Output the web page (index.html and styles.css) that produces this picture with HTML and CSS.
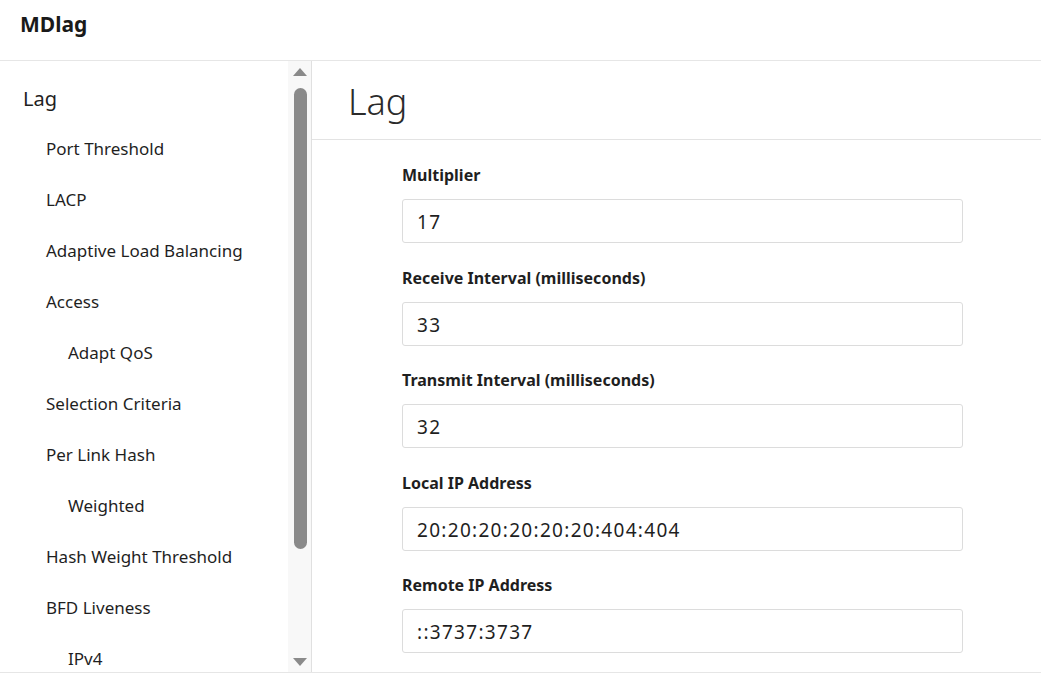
FILE: index.html
```html
<!DOCTYPE html>
<html>
<head>
<meta charset="utf-8">
<link rel="stylesheet" href="styles.css">
</head>
<body>
<header class="topbar"><h1 class="app-title">MDlag</h1></header>
<div class="workspace">
  <nav class="sidenav">
    <ul class="navlist">
      <li class="nav-item lvl0">Lag</li>
      <li class="nav-item lvl1">Port Threshold</li>
      <li class="nav-item lvl1">LACP</li>
      <li class="nav-item lvl1">Adaptive Load Balancing</li>
      <li class="nav-item lvl1">Access</li>
      <li class="nav-item lvl2">Adapt QoS</li>
      <li class="nav-item lvl1">Selection Criteria</li>
      <li class="nav-item lvl1">Per Link Hash</li>
      <li class="nav-item lvl2">Weighted</li>
      <li class="nav-item lvl1">Hash Weight Threshold</li>
      <li class="nav-item lvl1">BFD Liveness</li>
      <li class="nav-item lvl2">IPv4</li>
    </ul>
    <div class="scrollbar">
      <div class="arrow up"></div>
      <div class="thumb-track"><div class="thumb"></div></div>
      <div class="arrow down"></div>
    </div>
  </nav>
  <main class="content">
    <div class="page-head"><h2 class="page-title">Lag</h2></div>
    <form class="form">
      <div class="field"><label class="field-label">Multiplier</label><div class="input">17</div></div>
      <div class="field"><label class="field-label">Receive Interval (milliseconds)</label><div class="input">33</div></div>
      <div class="field"><label class="field-label">Transmit Interval (milliseconds)</label><div class="input">32</div></div>
      <div class="field"><label class="field-label">Local IP Address</label><div class="input">20:20:20:20:20:20:404:404</div></div>
      <div class="field"><label class="field-label">Remote IP Address</label><div class="input">::3737:3737</div></div>
    </form>
  </main>
</div>
</body>
</html>
```
FILE: styles.css
```css
* { box-sizing: border-box; }
html, body { margin: 0; padding: 0; }
body {
  font-family: "Noto Sans", "Open Sans", sans-serif;
  color: #1f1f1f;
  background: #fff;
  width: 1041px;
  height: 682px;
  overflow: hidden;
}
.topbar {
  height: 61px;
  border-bottom: 1px solid #e6e6e6;
  display: flex;
  align-items: center;
  padding-left: 20px;
}
.app-title {
  margin: 0;
  font-size: 21px;
  font-weight: 700;
  color: #1a1a1a;
  position: relative;
  top: -6px;
}
.workspace {
  display: flex;
  height: 612px;
  border-bottom: 1px solid #e6e6e6;
}
.sidenav {
  width: 312px;
  display: flex;
  border-right: 1px solid #e0e0e0;
  overflow: hidden;
}
.navlist {
  list-style: none;
  margin: 0;
  padding: 24px 0 0 0;
  flex: 1;
}
.nav-item {
  height: 51px;
  line-height: 25px;
  font-size: 17px;
  color: #1f1f1f;
  white-space: nowrap;
}
.lvl0 { font-size: 20px; padding-left: 23px; line-height: 27px; }
.lvl1 { padding-left: 46px; }
.lvl2 { padding-left: 68px; }
.scrollbar {
  width: 23px;
  background: #f8f8f8;
  display: flex;
  flex-direction: column;
  align-items: center;
  padding: 7px 0 6px 0;
}
.arrow {
  width: 0;
  height: 0;
  border-left: 7px solid transparent;
  border-right: 7px solid transparent;
}
.arrow.up { border-bottom: 8px solid #8a8a8a; }
.arrow.down { border-top: 8px solid #8a8a8a; }
.thumb-track {
  flex: 1;
  width: 100%;
  display: flex;
  justify-content: center;
  padding-top: 12px;
}
.thumb {
  width: 13px;
  height: 461px;
  background: #8a8a8a;
  border-radius: 7px;
  margin-left: 1px;
}
.content {
  flex: 1;
  overflow: hidden;
}
.page-head {
  height: 79px;
  border-bottom: 1px solid #e3e3e3;
  display: flex;
  align-items: center;
  padding-left: 36px;
}
.page-title {
  margin: 0;
  font-size: 36px;
  font-weight: 300;
  color: #2b2b2b;
  position: relative;
  top: 1px;
}
.form {
  padding: 24px 0 0 90px;
  width: 651px;
}
.field { margin-bottom: 23.5px; }
.field-label {
  display: block;
  font-size: 16px;
  font-weight: 700;
  color: #1f1f1f;
  line-height: 22px;
  margin-bottom: 13px;
}
.input {
  height: 44px;
  border: 1px solid #dcdcdc;
  border-radius: 3px;
  padding: 2px 14px 0 14px;
  font-size: 19px;
  line-height: 40px;
  color: #1f1f1f;
  letter-spacing: 1.3px;
}
```
